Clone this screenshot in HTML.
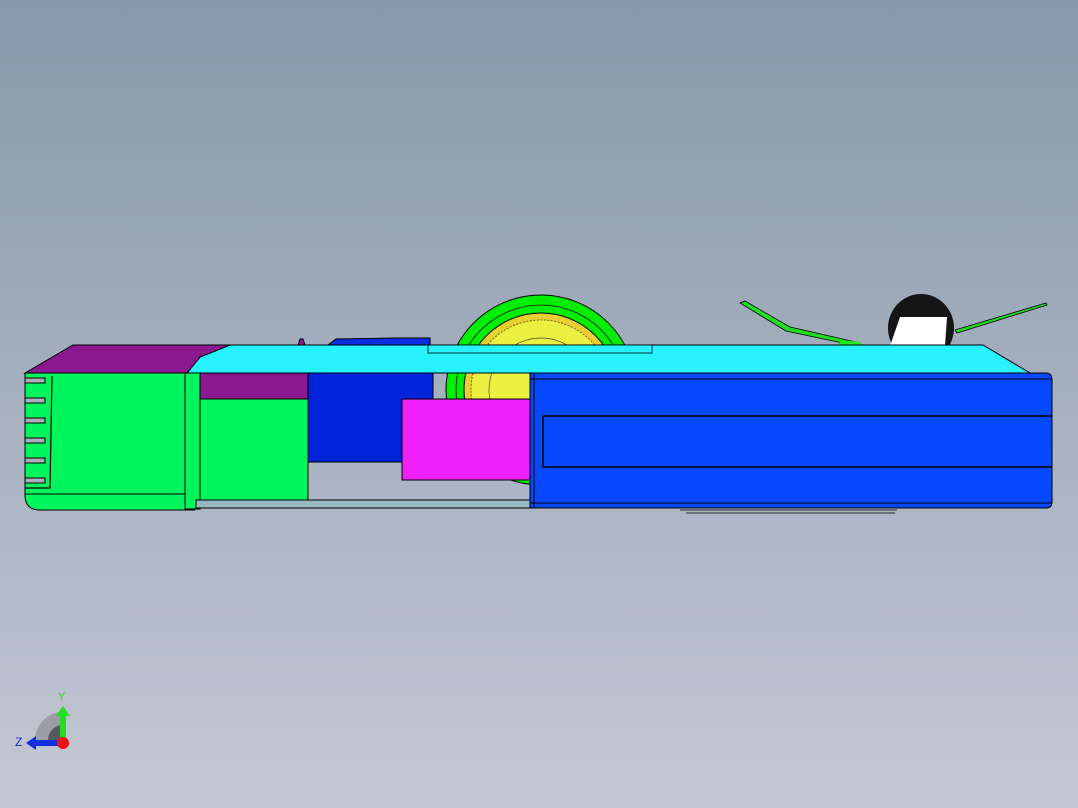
<!DOCTYPE html>
<html><head><style>
html,body{margin:0;padding:0;width:1078px;height:808px;overflow:hidden}
body{background:linear-gradient(#8898aa 0%,#a6b0bf 50%,#c4c8d4 100%)}
svg{position:absolute;left:0;top:0}
text{font-family:"Liberation Sans",sans-serif}
</style></head><body>
<svg width="1078" height="808" viewBox="0 0 1078 808" stroke="#000" stroke-width="1">
<path d="M328,345 L336,339 L396,338 L430,338 L430,345 Z" fill="#0a2ee0"/>
<path d="M298,345 L300,339 L303,339 L305,345Z" fill="#8a1890"/>
<!-- big wheel -->
<circle cx="541" cy="390" r="95" fill="#00ee00"/>
<circle cx="541" cy="390" r="85" fill="none" stroke-width="0.8"/>
<circle cx="541" cy="390" r="77" fill="#e8d030"/>
<circle cx="541" cy="390" r="70" fill="#ecf040" stroke="#6a6a20" stroke-dasharray="2 1.5"/>
<circle cx="541" cy="390" r="52" fill="none" stroke="#444" stroke-width="0.7"/>
<!-- small wheel right -->
<ellipse cx="921" cy="328" rx="33" ry="34" fill="#151515" stroke="none"/>
<path d="M900,317 L947,317 L945,346 L890,346 Z" fill="#fff" stroke="none"/>
<path d="M740,303 L745,301 L790,327 L860,343 L857,346 L786,331Z" fill="#22dd22" stroke-width="0.8"/>
<path d="M955,330 L1046,303 L1047,305 L957,333Z" fill="#22dd22" stroke-width="0.8"/>
<ellipse cx="850" cy="344" rx="12" ry="3" fill="#22ee22" stroke="none"/>
<!-- top cyan panel -->
<path d="M187,373 L200,357 L230,345 L983,345 L1030,373 Z" fill="#28f2ff"/>
<rect x="428" y="345" width="224" height="8" fill="#28f2ff" stroke-width="0.8"/>
<path d="M25,373 L73,345 L230,345 L200,357 L187,373 Z" fill="#8a1890"/>
<!-- left green -->
<path d="M25,373 L187,373 L187,506 L195,510 L40,510 Q25,510 25,495 Z" fill="#00f55c"/>
<path d="M25,494 L187,494" fill="none"/>
<path d="M52,376 L50,488 L25,488" fill="none" stroke-width="1.2"/>
<g fill="#a8b0bb" stroke-width="1">
<rect x="25" y="378" width="20" height="5"/><rect x="25" y="398" width="20" height="5"/><rect x="25" y="418" width="20" height="5"/><rect x="25" y="438" width="20" height="5"/><rect x="25" y="458" width="20" height="5"/><rect x="25" y="478" width="20" height="5"/>
</g>
<rect x="185" y="373" width="15" height="136" fill="#00f55c"/>
<rect x="200" y="373" width="108" height="26" fill="#8a1890"/>
<rect x="200" y="399" width="108" height="101" fill="#00f55c"/>
<rect x="308" y="373" width="125" height="89" fill="#0024dc"/>
<rect x="196" y="500" width="336" height="8" fill="#98b8c0"/>
<rect x="402" y="399" width="128" height="81" fill="#f020f8"/>
<!-- right blue -->
<path d="M530,373 L1046,373 Q1052,373 1052,380 L1052,502 Q1052,508 1046,508 L530,508 Z" fill="#0648fc"/>
<path d="M530,379 L1052,379 M530,503 L1052,503 M534,373 L534,508" fill="none"/>
<path d="M1052,416 L543,416 L543,467 L1052,467" fill="none" stroke-width="1.5"/>
<path d="M680,510 L897,510 M686,513 L895,513" fill="none" stroke-width="0.8"/>
<path d="M40,510 L140,510" fill="none"/>
<!-- triad -->
<path d="M35,740 A28,28 0 0 1 63,712 L63,740Z" fill="#9a9ea6" stroke="none"/>
<path d="M48,740 A15,15 0 0 1 63,725 L63,740Z" fill="#55595f" stroke="none"/>
<rect x="60" y="714" width="6" height="26" fill="#22dd22" stroke="none"/>
<path d="M56,716 L63,706 L70,716Z" fill="#22dd22" stroke="none"/>
<rect x="34" y="740" width="28" height="6" fill="#1030e0" stroke="none"/>
<path d="M36,736 L26,743 L36,750Z" fill="#1030e0" stroke="none"/>
<circle cx="63" cy="743" r="6" fill="#ee1111" stroke="none"/>
<text x="58" y="700" font-size="11" fill="#22dd22" stroke="none">Y</text>
<text x="15" y="746" font-size="12" fill="#1030e0" stroke="none">Z</text>
</svg>
</body></html>
